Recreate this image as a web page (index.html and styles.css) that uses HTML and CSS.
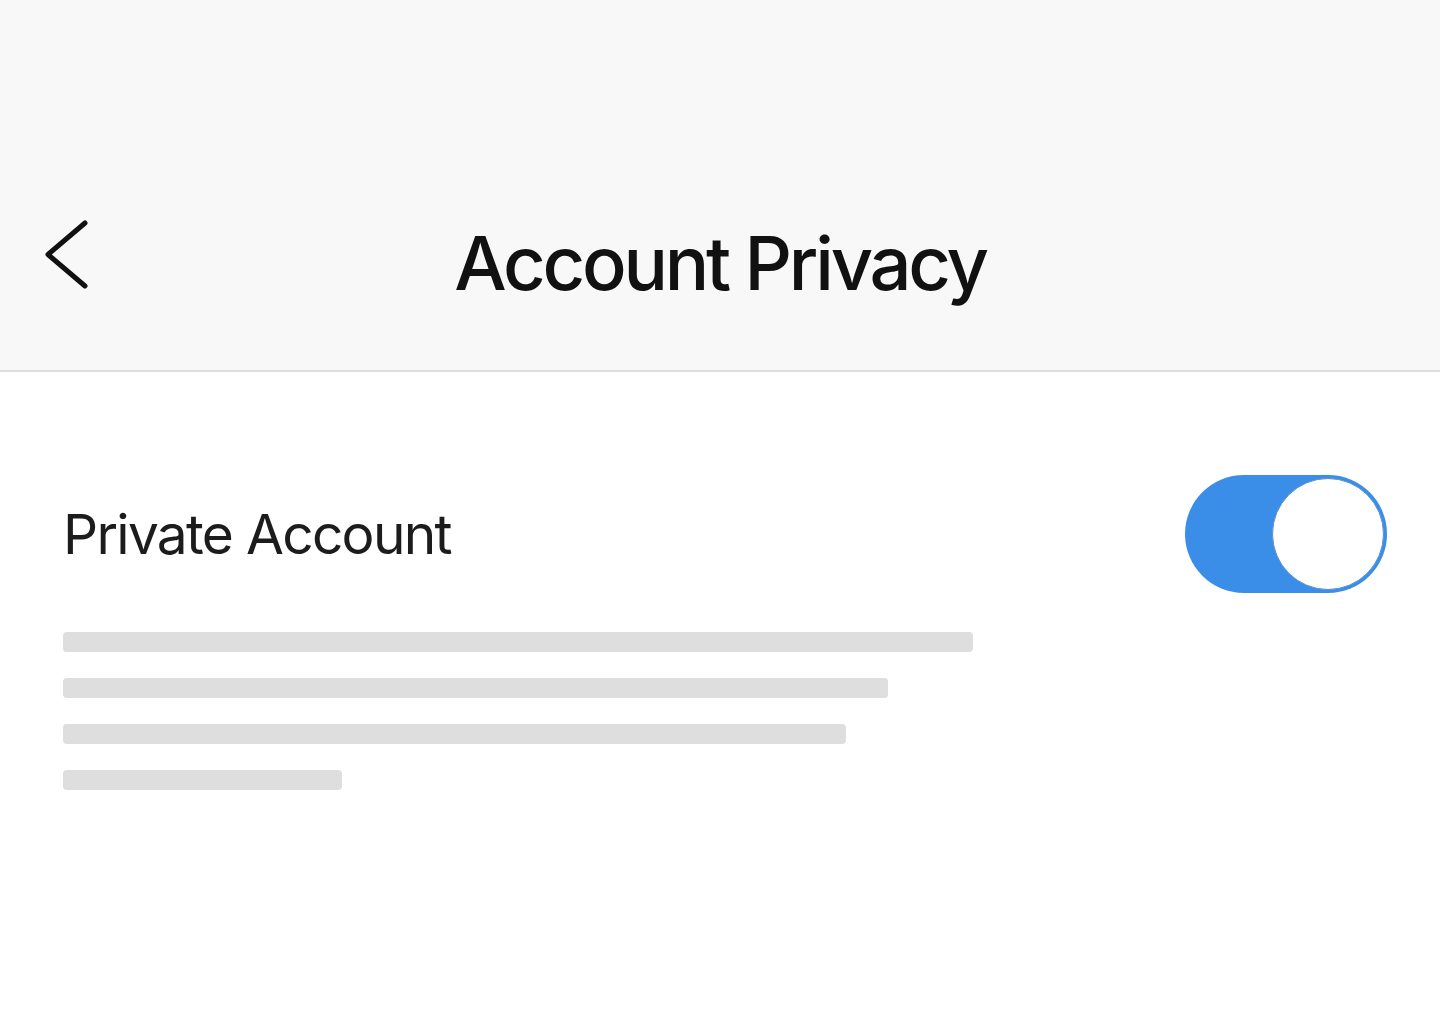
FILE: index.html
```html
<!DOCTYPE html>
<html lang="en">
<head>
    <meta charset="UTF-8">
    <meta name="viewport" content="width=device-width, initial-scale=1.0">
    <title>Account Privacy</title>
    <link rel="stylesheet" href="styles.css">
</head>
<body>
    <header class="top-bar">
        <div class="bar-row">
            <button class="back-btn" aria-label="Back">
                <svg width="44" height="70" viewBox="0 0 44 70">
                    <polyline points="40,3 3,34.5 40,66" fill="none" stroke="#111" stroke-width="5" stroke-linecap="round" stroke-linejoin="round"/>
                </svg>
            </button>
            <h1 class="bar-title">Account Privacy</h1>
            <div></div>
        </div>
    </header>

    <main class="settings">
        <div class="setting-row">
            <span class="setting-label">Private Account</span>
            <div class="toggle on"><span class="knob"></span></div>
        </div>
        <div class="placeholder">
            <div class="ph-line ph-1"></div>
            <div class="ph-line ph-2"></div>
            <div class="ph-line ph-3"></div>
            <div class="ph-line ph-4"></div>
        </div>
    </main>
</body>
</html>
```

FILE: styles.css
```css
body {
    margin: 0;
    font-family: Inter, "Noto Sans", sans-serif;
    background: #fff;
}
.top-bar {
    height: 372px;
    background: #f8f8f8;
    border-bottom: 2px solid #dedede;
    box-sizing: border-box;
}
.bar-row {
    display: grid;
    grid-template-columns: 1fr auto 1fr;
    align-items: start;
    padding-top: 220px;
}
.back-btn {
    justify-self: start;
    margin-left: 45px;
    padding: 0;
    border: none;
    background: none;
    display: flex;
}
.bar-title {
    margin: 6px 0 0;
    font-size: 74px;
    line-height: 1;
    font-weight: 500;
    letter-spacing: -3.2px;
    color: #111;
}
.settings {
    padding: 103px 53px 0 63px;
}
.setting-row {
    display: flex;
    justify-content: space-between;
    align-items: flex-start;
}
.setting-label {
    margin-top: 32px;
    font-size: 55px;
    line-height: 1;
    color: #1c1c1c;
    letter-spacing: -1.7px;
}
.toggle {
    width: 202px;
    height: 118px;
    border-radius: 59px;
    background: #3b8ee8;
    display: flex;
    align-items: center;
    justify-content: flex-end;
    padding: 0 3px;
    box-sizing: border-box;
}
.knob {
    width: 112px;
    height: 112px;
    border-radius: 50%;
    background: #fff;
    border: 1.5px solid #5b8fcc;
    box-sizing: border-box;
}
.placeholder {
    margin-top: 39px;
    display: flex;
    flex-direction: column;
    gap: 26px;
}
.ph-line {
    height: 20px;
    border-radius: 4px;
    background: #dedede;
}
.ph-1 { width: 910px; }
.ph-2 { width: 825px; }
.ph-3 { width: 783px; }
.ph-4 { width: 279px; }
```
